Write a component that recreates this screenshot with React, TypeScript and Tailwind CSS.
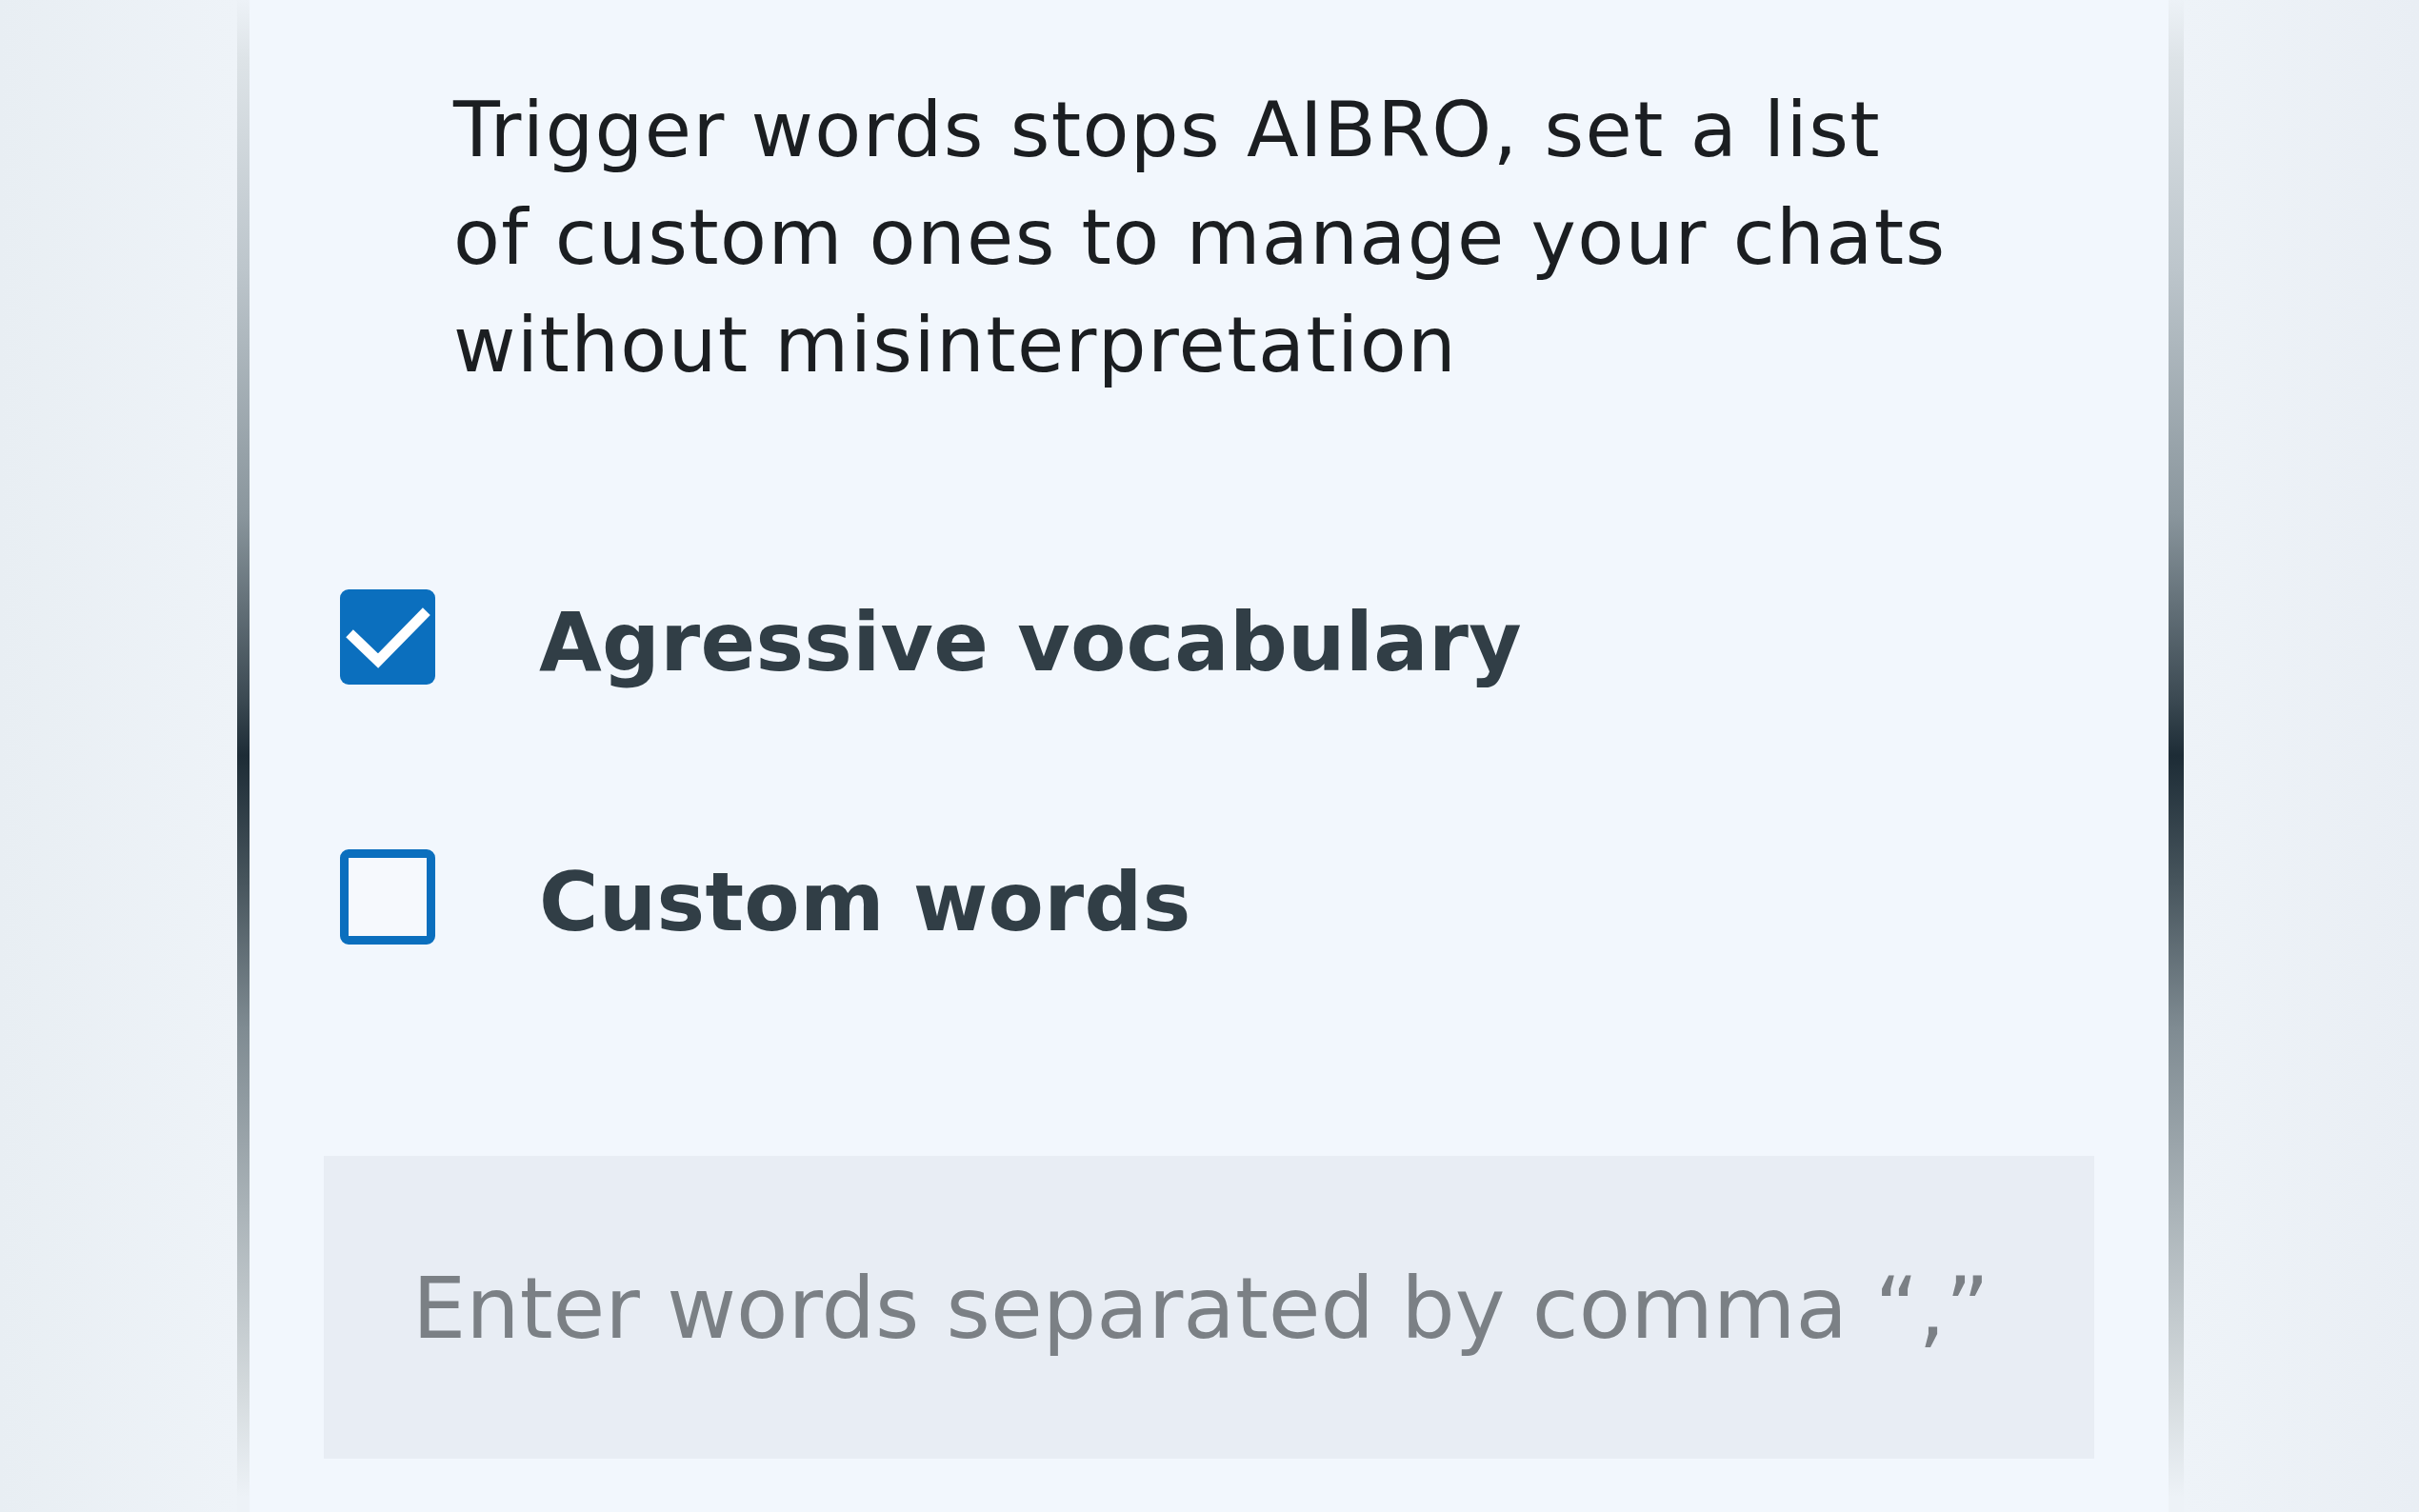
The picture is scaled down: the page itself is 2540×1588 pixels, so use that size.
import { useState } from "react";

// Side rails of the device frame: fade in from the top, darkest at the middle
const railGradient =
  "bg-[linear-gradient(to_bottom,rgba(226,232,236,0)_0%,#dde3e7_4%,#bcc5cb_18%,#8a969d_34%,#3d4b54_46%,#1d2c36_50%,#45535b_58%,#7f8b92_68%,#aab3b8_80%,#d4dadd_92%,rgba(230,236,240,0)_99%)]";

function Rail({ wide }: { wide?: boolean }) {
  return <div className={`h-full shrink-0 ${wide ? "w-[16px]" : "w-[13px]"} ${railGradient}`} />;
}

function Checkbox({ checked, onToggle }: { checked: boolean; onToggle: () => void }) {
  return (
    <button
      type="button"
      onClick={onToggle}
      className={`w-[100px] h-[100px] shrink-0 rounded-[9px] flex items-center justify-center ${
        checked ? "bg-[#0b6fbe]" : "bg-[#f6f9fd] border-[9px] border-[#0b6fbe]"
      }`}
    >
      {checked && (
        <svg viewBox="0 0 100 100" className="w-[100px] h-[100px]">
          <path d="M14 50 L40 75 L87 27" fill="none" stroke="#ffffff" strokeWidth="11" strokeLinecap="square" />
        </svg>
      )}
    </button>
  );
}

function Option({ label, checked, onToggle }: { label: string; checked: boolean; onToggle: () => void }) {
  return (
    <label className="flex items-center gap-[109px] pl-[17px]">
      <Checkbox checked={checked} onToggle={onToggle} />
      <span className="h-[100px] pt-[12px] whitespace-nowrap text-[85px] leading-[88px] font-bold text-[#313e46] tracking-[0.3px]">
        {label}
      </span>
    </label>
  );
}

export default function App() {
  const [aggressive, setAggressive] = useState(true);
  const [custom, setCustom] = useState(false);

  return (
    <div
      className="w-[2540px] h-[1588px] flex overflow-hidden bg-[#edf2f7]"
      style={{ fontFamily: '"DejaVu Sans", "Liberation Sans", sans-serif' }}
    >
      {/* outer backdrop, left */}
      <div className="w-[249px] h-full shrink-0 bg-[linear-gradient(to_right,#e8eef3,#eef3f8)]" />
      <Rail />

      {/* settings panel */}
      <div className="w-[2015px] shrink-0 h-full bg-[#f2f7fd] px-[78px] pt-[80px] flex flex-col">
        <p className="pl-[136px] whitespace-nowrap text-[80px] leading-[113px] text-[#1b1e21] tracking-[1.4px]">
          Trigger words stops AIBRO, set a list
          <br />
          of custom ones to manage your chats
          <br />
          without misinterpretation
        </p>

        <div className="mt-[200px] flex flex-col gap-[173px]">
          <Option label="Agressive vocabulary" checked={aggressive} onToggle={() => setAggressive(!aggressive)} />
          <Option label="Custom words" checked={custom} onToggle={() => setCustom(!custom)} />
        </div>

        <div className="mt-[222px] h-[318px] bg-[#e8edf4] flex items-center pl-[93px] pt-[4px]">
          <input
            className="w-full min-w-0 bg-transparent outline-none text-[89px] text-[#1d2125] placeholder:text-[#7b8085]"
            placeholder="Enter words separated by comma “,”"
          />
        </div>
      </div>

      <Rail wide />
      {/* outer backdrop, right */}
      <div className="flex-1 h-full bg-[linear-gradient(to_right,#eef3f8,#e9eef4)]" />
    </div>
  );
}
